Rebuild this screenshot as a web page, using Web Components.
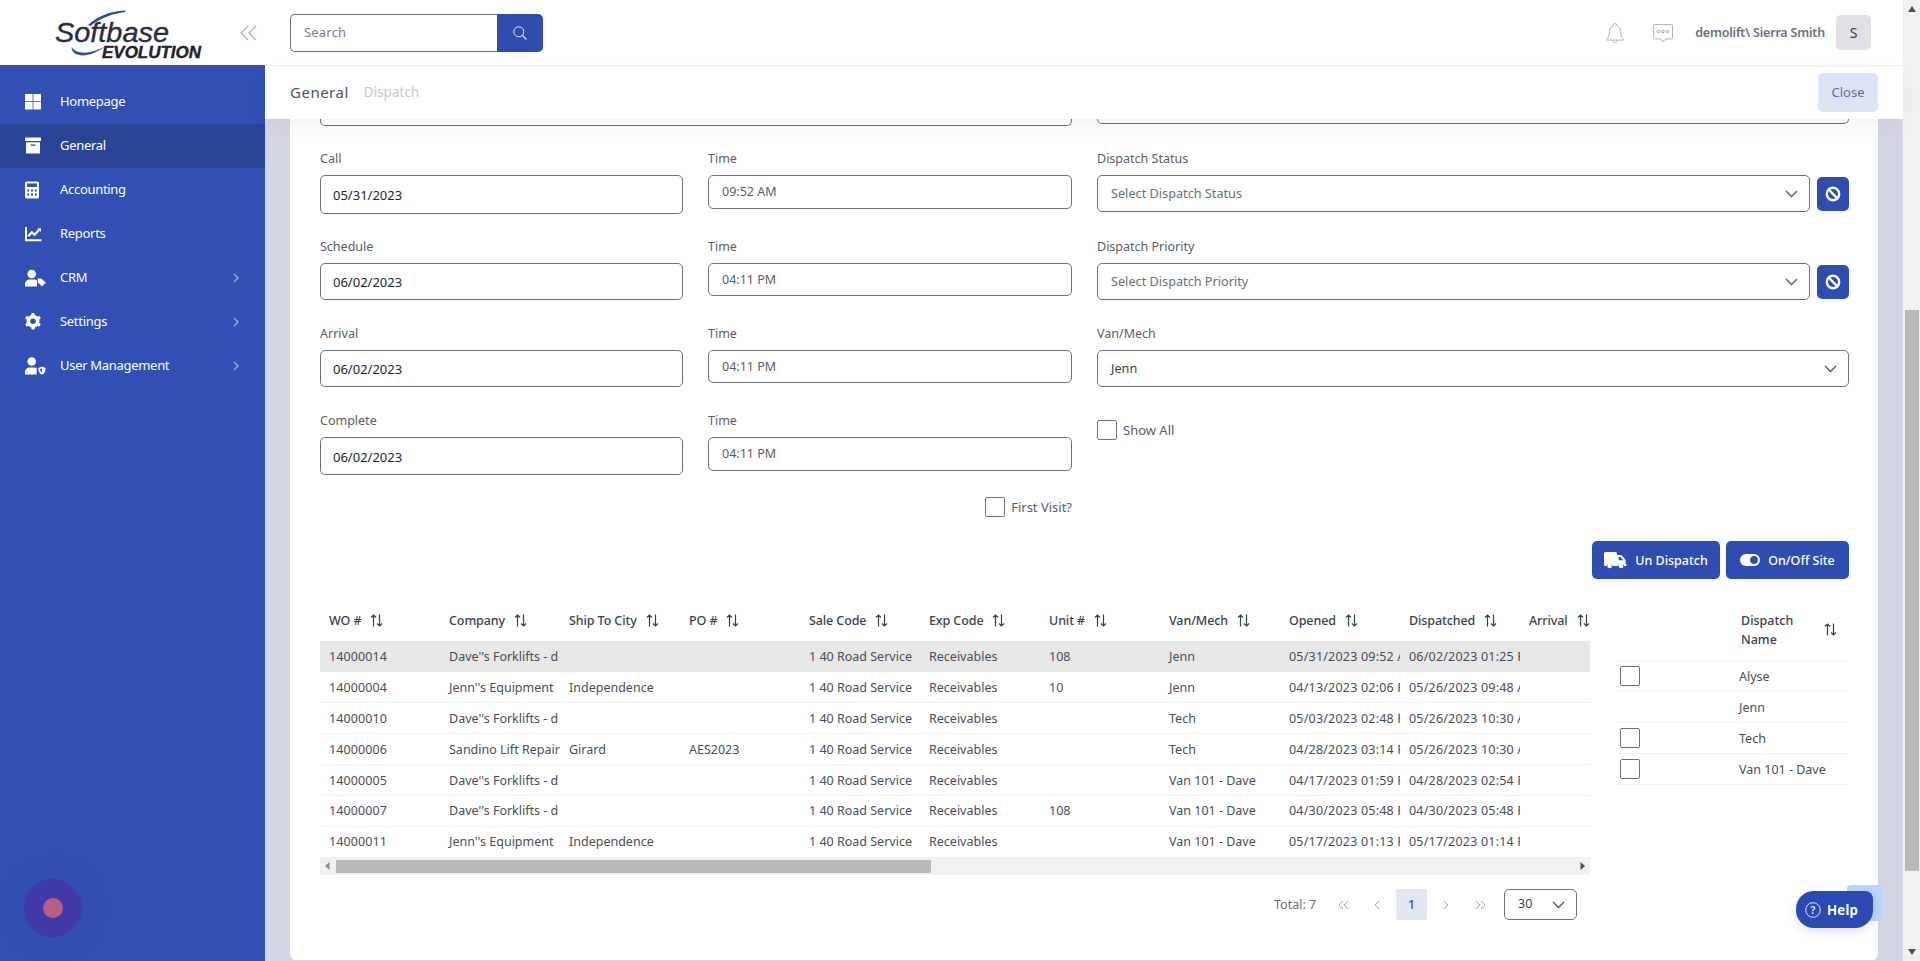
<!DOCTYPE html>
<html lang="en">
<head>
<meta charset="utf-8">
<title>Softbase Evolution</title>
<style>
  html, body { margin: 0; height: 100%; overflow: hidden; }
  body { display: flex; font-family: "Noto Sans", "Open Sans", sans-serif; font-size: 13px; color: #4a4d58; background: #fff; }
</style>
</head>
<body>
<side-nav>
  <nav-item>
    <svg slot="icon" width="22" height="18" viewBox="0 0 22 18"><path fill="#fff" d="M0 1h7.6v7.3H0zM8.4 1H16v7.3H8.4zM0 9.1h7.6v7.4H0zM8.4 9.1H16v7.4H8.4z"/></svg>
    Homepage
  </nav-item>
  <nav-item active>
    <svg slot="icon" width="22" height="18" viewBox="0 0 22 18"><path fill="#fff" fill-rule="evenodd" d="M0 .5h16v3.6H0zM1 5.2h14v11.3H1zM5.6 7.4v1.3h4.8V7.4z"/></svg>
    General
  </nav-item>
  <nav-item>
    <svg slot="icon" width="22" height="18" viewBox="0 0 22 18"><path fill="#fff" fill-rule="evenodd" d="M1.5.5h11A1.5 1.5 0 0 1 14 2v14a1.5 1.5 0 0 1-1.5 1.5h-11A1.5 1.5 0 0 1 0 16V2A1.5 1.5 0 0 1 1.5.5zM2 2.6v3.5h10V2.6zM2.2 8.4v2h2v-2zM6 8.4v2h2v-2zM9.8 8.4v2h2v-2zM2.2 12.4v2h2v-2zM6 12.4v2h2v-2zM9.8 12.4v2h2v-2z"/></svg>
    Accounting
  </nav-item>
  <nav-item>
    <svg slot="icon" width="22" height="18" viewBox="0 0 22 18"><path fill="#fff" d="M0 2h2v12.2h14.500v2H0z"/><path fill="none" stroke="#fff" stroke-width="2.300" d="M3.200 11.300l3.600-4 2.800 2.400 4.600-5"/><path fill="#fff" d="M12.300 3.200h3.700v3.700z"/></svg>
    Reports
  </nav-item>
  <nav-item chevron>
    <svg slot="icon" width="22" height="18" viewBox="0 0 22 18"><circle cx="6.700" cy="5" r="4.300" fill="#fff"/><path fill="#fff" d="M0 17.500v-2.200c0-3 2.200-4.800 5-4.800h4c1.200 0 2.200.3 3 .9v6.100z"/><path fill="#fff" d="M12.700 9.400h3.600l4.500 4.300-3.800 3.900-4.300-4.400z"/></svg>
    CRM
  </nav-item>
  <nav-item chevron>
    <svg slot="icon" width="22" height="18" viewBox="0 0 22 18"><g fill="#fff"><rect x="6.300" y="0" width="3.400" height="16.500" rx="1"/><rect x="6.300" y="0" width="3.400" height="16.500" rx="1" transform="rotate(60 8 8.250)"/><rect x="6.300" y="0" width="3.400" height="16.500" rx="1" transform="rotate(120 8 8.250)"/></g><circle cx="8" cy="8.250" r="4.700" fill="none" stroke="#fff" stroke-width="3.600"/><circle cx="8" cy="8.250" r="2.800" fill="#324fb4"/></svg>
    Settings
  </nav-item>
  <nav-item chevron>
    <svg slot="icon" width="22" height="18" viewBox="0 0 22 18"><circle cx="6.700" cy="4.500" r="4.300" fill="#fff"/><path fill="#fff" d="M0 17.500v-2.200c0-3 2.200-4.800 5-4.800h4c1 0 1.900.2 2.700.6v6.400z"/><path fill="#fff" d="M17 9.500l3.700 1.400c0 3.200-1 5.500-3.700 6.800-2.700-1.300-3.700-3.600-3.700-6.800z"/><path fill="#324fb4" d="M17 11.300v4.500c-1.300-.9-1.900-2.300-2-3.800z"/></svg>
    User Management
  </nav-item>
</side-nav>

<main-area>
  <top-bar></top-bar>
  <sub-bar></sub-bar>
  <work-area>
    <stub-row></stub-row>
    <form-grid>
      <text-field label="Call" value="05/31/2023" h="39" dark></text-field>
      <text-field label="Time" value="09:52 AM" h="34"></text-field>
      <pick-field label="Dispatch Status" value="Select Dispatch Status" h="37" clear></pick-field>
      <text-field label="Schedule" value="06/02/2023" h="37" dark></text-field>
      <text-field label="Time" value="04:11 PM" h="33"></text-field>
      <pick-field label="Dispatch Priority" value="Select Dispatch Priority" h="37" clear></pick-field>
      <text-field label="Arrival" value="06/02/2023" h="37" dark></text-field>
      <text-field label="Time" value="04:11 PM" h="33"></text-field>
      <pick-field label="Van/Mech" value="Jenn" h="37" dark></pick-field>
      <text-field label="Complete" value="06/02/2023" h="38" dark></text-field>
      <text-field label="Time" value="04:11 PM" h="34"></text-field>
      <check-box style="margin-top:9px;align-self:start">Show All</check-box>
      <check-box style="grid-column:1 / span 2;justify-self:end;align-self:start;margin-top:-1px">First Visit?</check-box>
    </form-grid>
    <action-row>
      <act-button w="128">
        <svg slot="icon" width="23" height="17" viewBox="0 0 23 17"><path fill="#fff" d="M1.500 0h10A1.500 1.500 0 0 1 13 1.500V3h3.600c.5 0 1 .2 1.300.6l3.300 3.800c.3.300.4.700.4 1.100V12c.6 0 1 .4 1 1s-.4 1-1 1h-1.400a3.100 3.100 0 0 0-6-.1H8.600a3.100 3.100 0 0 0-6 .1H1.500A1.500 1.500 0 0 1 0 12.500v-11A1.500 1.500 0 0 1 1.500 0z"/><path fill="#2f4cb0" d="M14.700 5v3.300h4.600l-2.900-3.300z"/><circle cx="5.600" cy="14" r="2.300" fill="#fff"/><circle cx="17.100" cy="14" r="2.300" fill="#fff"/></svg>
        Un Dispatch
      </act-button>
      <act-button w="123">
        <svg slot="icon" width="20" height="12" viewBox="0 0 20 12"><rect width="20" height="12" rx="6" fill="#fff"/><circle cx="14" cy="6" r="3.900" fill="#2f4cb0"/></svg>
        On/Off Site
      </act-button>
    </action-row>
    <table-row>
      <div>
        <wo-grid></wo-grid>
        <page-nav></page-nav>
      </div>
      <tech-grid></tech-grid>
    </table-row>
  </work-area>
</main-area>
<page-scroll></page-scroll>
<help-float></help-float>
<chat-dot></chat-dot>

<script>
const sortIcon = `<svg class="sort" width="13" height="13" viewBox="0 0 13 13"><path fill="none" stroke="#2c4650" stroke-width="1.200" d="M3.500 12.500V1M1 3.500L3.500 1 6 3.500M9.500 .5V12M7 9.500L9.500 12 12 9.500"/></svg>`;

class SideNav extends HTMLElement {
  constructor() {
    super();
    this.attachShadow({ mode: "open" });
    this.shadowRoot.innerHTML = `
      <style>
        :host { display: flex; flex-direction: column; width: 265px; flex: none; background: #324fb4; }
        .logo { display: flex; align-items: center; height: 65px; background: #fff; }
        .logo svg { display: block; }
        nav { padding-top: 15px; }
      </style>
      <div class="logo">
        <svg width="265" height="65" viewBox="0 0 265 65">
          <path fill="#2d4f9c" d="M88 25c9-8.500 21-13.500 36-14.500 1.500-.1 2 .8.900 1.400-11 1.500-24 5.500-34.400 14z"/>
          <path fill="#2d4f9c" d="M71.500 47c0 6.500 7 9.500 15.500 8 7-1.300 12.500-4.200 17.500-8.500-6 3-11.500 5.500-17.500 6-6.500.6-12.500-.8-15.500-5.500z"/>
          <text x="55" y="42" font-family="Liberation Sans" font-style="italic" font-size="27" fill="#2a2e39" stroke="#2a2e39" stroke-width=".35" textLength="114" lengthAdjust="spacingAndGlyphs">Softbase</text>
          <text x="102" y="58" font-family="Liberation Sans" font-style="italic" font-weight="700" font-size="16" fill="#1f232d" stroke="#1f232d" stroke-width=".4" textLength="99" lengthAdjust="spacingAndGlyphs">EVOLUTION</text>
          <path fill="none" stroke="#b7bac4" stroke-width="1.500" d="M248 26l-7 7 7 7M256 26l-7 7 7 7"/>
        </svg>
      </div>
      <nav><slot></slot></nav>
    `;
  }
}

class NavItem extends HTMLElement {
  constructor() {
    super();
    this.attachShadow({ mode: "open" });
    this.shadowRoot.innerHTML = `
      <style>
        :host { display: flex; align-items: center; height: 44px; padding-left: 25px; color: #fff; font-size: 13px; letter-spacing: -.3px; }
        :host([active]) { background: #2b4396; }
        .ic { width: 35px; display: flex; flex: none; }
        .txt { flex: 1; padding-bottom: 2px; }
        .chev { display: none; margin-right: 26px; }
        :host([chevron]) .chev { display: block; }
      </style>
      <span class="ic"><slot name="icon"></slot></span>
      <span class="txt"><slot></slot></span>
      <svg class="chev" width="6" height="10" viewBox="0 0 6 10"><path fill="none" stroke="#aab6e2" stroke-width="1.200" d="M1 1l4 4-4 4"/></svg>
    `;
  }
}

class MainArea extends HTMLElement {
  constructor() {
    super();
    this.attachShadow({ mode: "open" });
    this.shadowRoot.innerHTML = `
      <style>
        :host { display: flex; flex-direction: column; flex: 1; min-width: 0; height: 100%; }
      </style>
      <slot></slot>
    `;
  }
}

class TopBar extends HTMLElement {
  constructor() {
    super();
    this.attachShadow({ mode: "open" });
    this.shadowRoot.innerHTML = `
      <style>
        :host { display: flex; align-items: center; height: 65px; flex: none; padding: 0 32px 0 25px; border-bottom: 1px solid #eef0f3; background: #fff; }
        .search { display: flex; width: 253px; height: 38px; box-sizing: border-box; margin-top: 0; }
        .box { flex: 1; border: 1px solid #6f727b; border-right: 0; border-radius: 5px 0 0 5px; padding-left: 13px; line-height: 34px; color: #7b7e88; font-size: 13px; letter-spacing: .2px; }
        .go { width: 46px; background: #2f4cb0; border-radius: 0 5px 5px 0; display: flex; align-items: center; justify-content: center; }
        .right { margin-left: auto; display: flex; align-items: center; }
        .bell { margin: 2px 29px 0 0; }
        .msg { margin: 2px 22px 0 0; }
        .who { font-size: 12.500px; font-weight: 600; color: #6d707f; margin-right: 11px; letter-spacing: -.2px; white-space: nowrap; }
        .av { width: 35px; height: 35px; background: #dfe1e5; border-radius: 5px; text-align: center; line-height: 35px; font-size: 14px; color: #3d4050; }
      </style>
      <div class="search">
        <div class="box">Search</div>
        <div class="go"><svg width="14" height="14" viewBox="0 0 14 14"><circle cx="5.800" cy="5.800" r="5" fill="none" stroke="#e6eaf7" stroke-width="1"/><path stroke="#e6eaf7" stroke-width="1.100" d="M9.500 9.500l4 4"/></svg></div>
      </div>
      <div class="right">
        <svg class="bell" width="18" height="21" viewBox="0 0 18 21"><path fill="none" stroke="#b4b6bc" stroke-width="1" d="M7.700 2.300a1.400 1.400 0 1 1 2.600 0c2.700.8 4.200 3 4.200 6 0 4 .8 6 2.800 8 .3.300.1.800-.3.800H1c-.4 0-.6-.5-.3-.8 2-2 2.800-4 2.800-8 0-3 1.500-5.200 4.200-6zM6.800 17.100c.2 1.500 1 2.400 2.200 2.400s2-.9 2.200-2.400"/></svg>
        <svg class="msg" width="20" height="19" viewBox="0 0 20 19"><path fill="none" stroke="#b4b6bc" stroke-width="1" d="M1.500.5h17a1 1 0 0 1 1 1v12.400a1 1 0 0 1-1 1h-6L10 18l-2.500-3.100h-6a1 1 0 0 1-1-1V1.500a1 1 0 0 1 1-1z"/><g fill="none" stroke="#9fa2a9" stroke-width=".9"><circle cx="5.500" cy="7.500" r="1.300"/><circle cx="10" cy="7.500" r="1.300"/><circle cx="14.500" cy="7.500" r="1.300"/></g></svg>
        <span class="who">demolift\\ Sierra Smith</span>
        <span class="av">S</span>
      </div>
    `;
  }
}

class SubBar extends HTMLElement {
  constructor() {
    super();
    this.attachShadow({ mode: "open" });
    this.shadowRoot.innerHTML = `
      <style>
        :host { display: flex; align-items: center; height: 53px; flex: none; padding: 0 25px; background: #fff; position: relative; z-index: 2; box-shadow: 0 8px 18px rgba(60,60,90,.05); }
        .on { font-size: 15px; color: #50535f; letter-spacing: .5px; margin-right: 15px; padding-bottom: 2px; }
        .off { font-size: 13.500px; color: #c6c8cf; padding-bottom: 2px; }
        .close { margin-left: auto; width: 60px; height: 39px; background: #dde3f4; border-radius: 5px; text-align: center; line-height: 39px; color: #5c6bae; font-size: 13px; }
      </style>
      <span class="on">General</span>
      <span class="off">Dispatch</span>
      <span class="close">Close</span>
    `;
  }
}

class WorkArea extends HTMLElement {
  constructor() {
    super();
    this.attachShadow({ mode: "open" });
    this.shadowRoot.innerHTML = `
      <style>
        :host { display: flex; flex: 1; min-height: 0; background: #d5d6e3; padding: 0 25px 1px; }
        .card { flex: 1; background: #fff; border-radius: 0 0 6px 6px; padding: 0 29px 0 30px; min-width: 0; }
      </style>
      <div class="card"><slot></slot></div>
    `;
  }
}

class StubRow extends HTMLElement {
  constructor() {
    super();
    this.attachShadow({ mode: "open" });
    this.shadowRoot.innerHTML = `
      <style>
        :host { display: flex; justify-content: space-between; align-items: flex-start; height: 7px; }
        div { box-sizing: border-box; border: 1px solid #6f727b; border-top: 0; border-radius: 0 0 5px 5px; }
        .a { width: 752px; height: 7px; }
        .b { width: 752px; height: 5px; }
      </style>
      <div class="a"></div><div class="b"></div>
    `;
  }
}

class FormGrid extends HTMLElement {
  constructor() {
    super();
    this.attachShadow({ mode: "open" });
    this.shadowRoot.innerHTML = `
      <style>
        :host { display: grid; grid-template-columns: 363px 364px 752px; column-gap: 25px; grid-template-rows: 88px 87px 87px 87px 20px; margin-top: 23px; }
      </style>
      <slot></slot>
    `;
  }
}

class TextField extends HTMLElement {
  constructor() {
    super();
    this.attachShadow({ mode: "open" });
  }
  connectedCallback() {
    const h = Number(this.getAttribute("h"));
    this.shadowRoot.innerHTML = `
      <style>
        :host { display: block; }
        label { display: block; height: 20px; line-height: 20px; margin-bottom: 6px; color: #5a5d68; font-size: 12.500px; }
        .in { box-sizing: border-box; height: ${h}px; border: 1px solid #6f727b; border-radius: 5px; padding-left: 13px; line-height: ${h - 2}px; font-size: 12.500px; color: #5a5d68; }
        :host([dark]) .in { color: #23262e; font-size: 13px; padding-left: 12px; line-height: ${h}px; }
      </style>
      <label>${this.getAttribute("label")}</label>
      <div class="in">${this.getAttribute("value")}</div>
    `;
  }
}

class PickField extends HTMLElement {
  constructor() {
    super();
    this.attachShadow({ mode: "open" });
  }
  connectedCallback() {
    const h = this.getAttribute("h");
    const clear = this.hasAttribute("clear") ? `
      <div class="clr"><svg width="16" height="16" viewBox="0 0 16 16"><circle cx="8" cy="8" r="6.200" fill="none" stroke="#fff" stroke-width="2.400"/><path stroke="#fff" stroke-width="2.400" d="M3.700 3.700l8.600 8.600"/></svg></div>` : "";
    this.shadowRoot.innerHTML = `
      <style>
        :host { display: block; }
        label { display: block; height: 20px; line-height: 20px; margin-bottom: 6px; color: #5a5d68; font-size: 12.500px; }
        .row { display: flex; align-items: center; gap: 7px; }
        .sel { flex: 1; box-sizing: border-box; height: ${h}px; border: 1px solid #6f727b; border-radius: 5px; padding: 0 11px 0 13px; display: flex; align-items: center; justify-content: space-between; font-size: 12.700px; color: #6b6e78; }
        .sel span { padding-bottom: 2px; }
        :host([dark]) .sel { color: #3c3f48; }
        .clr { width: 32px; height: 34px; background: #2f4cb0; border-radius: 5px; display: flex; align-items: center; justify-content: center; }
      </style>
      <label>${this.getAttribute("label")}</label>
      <div class="row">
        <div class="sel"><span>${this.getAttribute("value")}</span><svg width="13" height="8" viewBox="0 0 13 8"><path fill="none" stroke="#555860" stroke-width="1.300" d="M1 1l5.500 5.500L12 1"/></svg></div>${clear}
      </div>
    `;
  }
}

class CheckBox extends HTMLElement {
  constructor() {
    super();
    this.attachShadow({ mode: "open" });
    this.shadowRoot.innerHTML = `
      <style>
        :host { display: inline-flex; align-items: center; gap: 6px; color: #5a5d68; font-size: 13px; }
        i { display: block; box-sizing: border-box; width: 20px; height: 20px; border: 1px solid #6f727b; border-radius: 2px; background: #fff; }
      </style>
      <i></i><span><slot></slot></span>
    `;
  }
}

class ActionRow extends HTMLElement {
  constructor() {
    super();
    this.attachShadow({ mode: "open" });
    this.shadowRoot.innerHTML = `
      <style>
        :host { display: flex; justify-content: flex-end; gap: 6px; margin-top: 23px; }
      </style>
      <slot></slot>
    `;
  }
}

class ActButton extends HTMLElement {
  constructor() {
    super();
    this.attachShadow({ mode: "open" });
  }
  connectedCallback() {
    this.shadowRoot.innerHTML = `
      <style>
        :host { display: flex; align-items: center; justify-content: center; gap: 8px; box-sizing: border-box; width: ${this.getAttribute("w")}px; height: 38px; background: #2f4cb0; border-radius: 5px; color: #fff; font-size: 12.500px; font-weight: 500; }
        .ic { display: flex; }
      </style>
      <span class="ic"><slot name="icon"></slot></span>
      <span><slot></slot></span>
    `;
  }
}

class TableRow extends HTMLElement {
  constructor() {
    super();
    this.attachShadow({ mode: "open" });
    this.shadowRoot.innerHTML = `
      <style>
        :host { display: flex; justify-content: space-between; margin-top: 21px; }
      </style>
      <slot></slot>
    `;
  }
}

const woColumns = ["WO #", "Company", "Ship To City", "PO #", "Sale Code", "Exp Code", "Unit #", "Van/Mech", "Opened", "Dispatched", "Arrival"];
const woRows = [
  ["14000014", "Dave''s Forklifts - d", "", "", "1 40 Road Service", "Receivables", "108", "Jenn", "05/31/2023 09:52 AM", "06/02/2023 01:25 PM", ""],
  ["14000004", "Jenn''s Equipment", "Independence", "", "1 40 Road Service", "Receivables", "10", "Jenn", "04/13/2023 02:06 PM", "05/26/2023 09:48 AM", ""],
  ["14000010", "Dave''s Forklifts - d", "", "", "1 40 Road Service", "Receivables", "", "Tech", "05/03/2023 02:48 PM", "05/26/2023 10:30 AM", ""],
  ["14000006", "Sandino Lift Repair", "Girard", "AES2023", "1 40 Road Service", "Receivables", "", "Tech", "04/28/2023 03:14 PM", "05/26/2023 10:30 AM", ""],
  ["14000005", "Dave''s Forklifts - d", "", "", "1 40 Road Service", "Receivables", "", "Van 101 - Dave", "04/17/2023 01:59 PM", "04/28/2023 02:54 PM", ""],
  ["14000007", "Dave''s Forklifts - d", "", "", "1 40 Road Service", "Receivables", "108", "Van 101 - Dave", "04/30/2023 05:48 PM", "04/30/2023 05:48 PM", ""],
  ["14000011", "Jenn''s Equipment", "Independence", "", "1 40 Road Service", "Receivables", "", "Van 101 - Dave", "05/17/2023 01:13 PM", "05/17/2023 01:14 PM", ""]
];

class WoGrid extends HTMLElement {
  constructor() {
    super();
    this.attachShadow({ mode: "open" });
    const head = woColumns.map(c => `<div class="th"><span>${c}</span>${sortIcon}</div>`).join("");
    const body = woRows.map((r, i) => `<div class="tr${i === 0 ? " sel" : ""}">${r.map(v => `<div class="td"><span>${v}</span></div>`).join("")}</div>`).join("");
    this.shadowRoot.innerHTML = `
      <style>
        :host { display: block; width: 1270px; overflow: hidden; }
        .head, .tr { display: grid; grid-template-columns: repeat(11, 120px); }
        .head { height: 41px; align-items: center; }
        .th { display: flex; align-items: center; padding-left: 9px; font-size: 12.500px; font-weight: 500; color: #3c3f4c; white-space: nowrap; overflow: hidden; letter-spacing: -.1px; }
        .sort { margin-left: 9px; flex: none; }
        .tr { height: 31px; box-sizing: border-box; border-bottom: 1px solid #eef0f3; width: 1320px; align-items: center; }
        .tr:nth-of-type(n+7) { padding-bottom: 1px; }
        .tr:nth-of-type(8) { height: 30px; border-bottom: 0; }
        .tr.sel { background: #e9e8e8; border-bottom: 0; }
        .td { padding: 0 10px 0 9px; white-space: nowrap; overflow: hidden; font-size: 12.500px; color: #4a4d58; }
        .td:first-child { letter-spacing: .1px; }
        .td:nth-child(n+9) { letter-spacing: .2px; }
        .hbar { position: relative; display: flex; align-items: center; justify-content: space-between; height: 18px; background: #f1f1f1; padding: 0 5px; box-sizing: border-box; }
        .thumb { position: absolute; left: 16px; top: 3px; width: 595px; height: 13px; background: #bababa; }
      </style>
      <div class="head">${head}</div>
      ${body}
      <div class="hbar">
        <svg width="5" height="8" viewBox="0 0 5 8"><path fill="#8d8d8d" d="M4.500 0v8L0 4z"/></svg>
        <div class="thumb"></div>
        <svg width="5" height="8" viewBox="0 0 5 8"><path fill="#505050" d="M.5 0v8L5 4z"/></svg>
      </div>
    `;
  }
}

class PageNav extends HTMLElement {
  constructor() {
    super();
    this.attachShadow({ mode: "open" });
    this.shadowRoot.innerHTML = `
      <style>
        :host { display: flex; align-items: center; height: 31px; margin-top: 14px; padding-left: 954px; font-size: 12.500px; color: #6b6e78; }
        .total { width: 52px; white-space: nowrap; }
        .pg { width: 34px; display: flex; justify-content: center; }
        .cur { width: 31px; height: 31px; margin: 0 2px; background: #e3e6f3; border-radius: 2px; text-align: center; line-height: 31px; color: #3a4fa8; font-weight: 500; }
        .size { box-sizing: border-box; width: 73px; height: 31px; margin-left: 7px; border: 1px solid #6f727b; border-radius: 5px; display: flex; align-items: center; justify-content: space-between; padding: 0 11px 3px 13px; color: #3c3f48; }
        .size svg { margin-top: 4px; }
        path { fill: none; stroke: #a0a2ab; stroke-width: 1; }
        .size path { stroke: #555860; stroke-width: 1.300; }
      </style>
      <span class="total">Total: 7</span>
      <span class="pg"><svg width="11" height="10" viewBox="0 0 11 10"><path d="M5 1L1 5l4 4M10 1L6 5l4 4"/></svg></span>
      <span class="pg"><svg width="6" height="10" viewBox="0 0 6 10"><path d="M5 1L1 5l4 4"/></svg></span>
      <span class="cur">1</span>
      <span class="pg"><svg width="6" height="10" viewBox="0 0 6 10"><path d="M1 1l4 4-4 4"/></svg></span>
      <span class="pg"><svg width="11" height="10" viewBox="0 0 11 10"><path d="M1 1l4 4-4 4M6 1l4 4-4 4"/></svg></span>
      <span class="size"><span>30</span><svg width="13" height="8" viewBox="0 0 13 8"><path d="M1 1l5.500 5.500L12 1"/></svg></span>
    `;
  }
}

class TechGrid extends HTMLElement {
  constructor() {
    super();
    this.attachShadow({ mode: "open" });
    const rows = [["Alyse", true], ["Jenn", false], ["Tech", true], ["Van 101 - Dave", true]];
    this.shadowRoot.innerHTML = `
      <style>
        :host { display: block; width: 232px; margin-right: 1px; }
        .head { display: flex; align-items: center; height: 61px; box-sizing: border-box; border-bottom: 1px solid #eef0f3; padding: 0 0 1px 125px; font-size: 12.500px; font-weight: 500; line-height: 19px; color: #3c3f4c; }
        .head span { width: 83px; }
        .tr { display: flex; align-items: center; height: 31px; box-sizing: border-box; border-bottom: 1px solid #eef0f3; font-size: 12.500px; color: #4a4d58; }
        .cb { width: 123px; flex: none; padding-left: 4px; box-sizing: border-box; }
        i { display: block; box-sizing: border-box; width: 20px; height: 20px; border: 1px solid #6f727b; border-radius: 2px; }
      </style>
      <div class="head"><span>Dispatch<br>Name</span>${sortIcon}</div>
      ${rows.map(r => `<div class="tr"><span class="cb">${r[1] ? "<i></i>" : ""}</span><span>${r[0]}</span></div>`).join("")}
    `;
  }
}

class PageScroll extends HTMLElement {
  constructor() {
    super();
    this.attachShadow({ mode: "open" });
    this.shadowRoot.innerHTML = `
      <style>
        :host { display: flex; flex-direction: column; align-items: center; width: 17px; flex: none; height: 100%; background: #f1f1f1; }
        svg { flex: none; margin-top: 6px; }
        .thumb { width: 14px; height: 561px; background: #b9b9b9; margin-top: 298px; }
        .dn { margin-top: auto; margin-bottom: 6px; }
      </style>
      <svg width="8" height="6" viewBox="0 0 8 6"><path fill="#505050" d="M4 0l4 6H0z"/></svg>
      <div class="thumb"></div>
      <svg class="dn" width="8" height="6" viewBox="0 0 8 6"><path fill="#505050" d="M0 0h8L4 6z"/></svg>
    `;
  }
}

class HelpFloat extends HTMLElement {
  constructor() {
    super();
    this.attachShadow({ mode: "open" });
    this.shadowRoot.innerHTML = `
      <style>
        :host { position: fixed; left: 1796px; top: 885px; width: 87px; height: 43px; }
        .back { position: absolute; left: 51px; top: 0; width: 36px; height: 36px; background: #bcd6f7; border-radius: 4px; }
        .btn { position: absolute; left: 0; top: 6px; width: 77px; height: 37px; box-sizing: border-box; background: #2b49b3; border-radius: 18px 8px 18px 18px; display: flex; align-items: center; padding-left: 9px; gap: 6px; color: #fff; font: 700 13.500px "Noto Sans", sans-serif; box-shadow: 0 3px 10px rgba(40,60,150,.15); }
      </style>
      <div class="back"></div>
      <div class="btn">
        <svg width="16" height="16" viewBox="0 0 16 16"><circle cx="8" cy="8" r="7.300" fill="none" stroke="#dfe5f8" stroke-width="1"/><text x="8" y="11.700" text-anchor="middle" font-size="10.500" font-family="Noto Sans" fill="#dfe5f8">?</text></svg>
        <span>Help</span>
      </div>
    `;
  }
}

class ChatDot extends HTMLElement {
  constructor() {
    super();
    this.attachShadow({ mode: "open" });
    this.shadowRoot.innerHTML = `
      <style>
        :host { position: fixed; left: 24px; top: 879px; width: 58px; height: 58px; border-radius: 50%; background: #4239a8; display: flex; align-items: center; justify-content: center; box-shadow: 0 0 24px rgba(40,70,150,.35); }
        i { display: block; width: 20px; height: 20px; border-radius: 50%; background: #b95f85; }
      </style>
      <i></i>
    `;
  }
}

customElements.define("side-nav", SideNav);
customElements.define("nav-item", NavItem);
customElements.define("main-area", MainArea);
customElements.define("top-bar", TopBar);
customElements.define("sub-bar", SubBar);
customElements.define("work-area", WorkArea);
customElements.define("stub-row", StubRow);
customElements.define("form-grid", FormGrid);
customElements.define("text-field", TextField);
customElements.define("pick-field", PickField);
customElements.define("check-box", CheckBox);
customElements.define("action-row", ActionRow);
customElements.define("act-button", ActButton);
customElements.define("table-row", TableRow);
customElements.define("wo-grid", WoGrid);
customElements.define("page-nav", PageNav);
customElements.define("tech-grid", TechGrid);
customElements.define("page-scroll", PageScroll);
customElements.define("help-float", HelpFloat);
customElements.define("chat-dot", ChatDot);
</script>
</body>
</html>
